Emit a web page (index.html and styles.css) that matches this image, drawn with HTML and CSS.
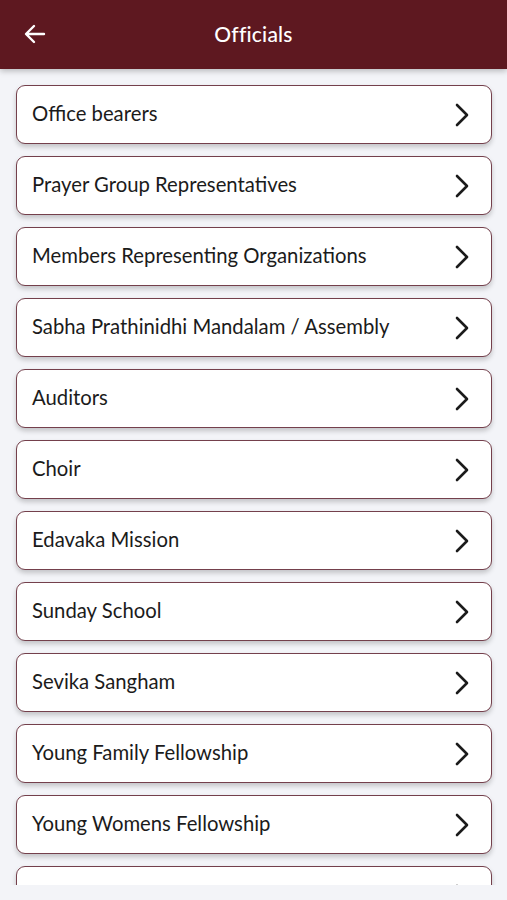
FILE: index.html
```html
<!DOCTYPE html>
<html lang="en">
<head>
  <meta charset="UTF-8" />
  <meta name="viewport" content="width=device-width, initial-scale=1.0" />
  <title>Officials</title>
  <link rel="stylesheet" href="styles.css">
</head>
<body>
  <header class="topbar">
    <button class="back" aria-label="Back">
      <svg width="22" height="20" viewBox="0 0 22 20" fill="none" stroke="#fff" stroke-width="2.4" stroke-linecap="round" stroke-linejoin="round">
        <path d="M20 10H2.5M10 2L2 10l8 8" />
      </svg>
    </button>
    <h1 class="title">Officials</h1>
  </header>

  <main class="list">
    <a class="item" href="#"><span>Office bearers</span><svg class="chev" viewBox="0 0 14 24"><path d="M2 2l10 10L2 22" /></svg></a>
    <a class="item" href="#"><span>Prayer Group Representatives</span><svg class="chev" viewBox="0 0 14 24"><path d="M2 2l10 10L2 22" /></svg></a>
    <a class="item" href="#"><span>Members Representing Organizations</span><svg class="chev" viewBox="0 0 14 24"><path d="M2 2l10 10L2 22" /></svg></a>
    <a class="item" href="#"><span>Sabha Prathinidhi Mandalam / Assembly</span><svg class="chev" viewBox="0 0 14 24"><path d="M2 2l10 10L2 22" /></svg></a>
    <a class="item" href="#"><span>Auditors</span><svg class="chev" viewBox="0 0 14 24"><path d="M2 2l10 10L2 22" /></svg></a>
    <a class="item" href="#"><span>Choir</span><svg class="chev" viewBox="0 0 14 24"><path d="M2 2l10 10L2 22" /></svg></a>
    <a class="item" href="#"><span>Edavaka Mission</span><svg class="chev" viewBox="0 0 14 24"><path d="M2 2l10 10L2 22" /></svg></a>
    <a class="item" href="#"><span>Sunday School</span><svg class="chev" viewBox="0 0 14 24"><path d="M2 2l10 10L2 22" /></svg></a>
    <a class="item" href="#"><span>Sevika Sangham</span><svg class="chev" viewBox="0 0 14 24"><path d="M2 2l10 10L2 22" /></svg></a>
    <a class="item" href="#"><span>Young Family Fellowship</span><svg class="chev" viewBox="0 0 14 24"><path d="M2 2l10 10L2 22" /></svg></a>
    <a class="item" href="#"><span>Young Womens Fellowship</span><svg class="chev" viewBox="0 0 14 24"><path d="M2 2l10 10L2 22" /></svg></a>
    <a class="item" href="#"><span>Youth Fellowship</span><svg class="chev" viewBox="0 0 14 24"><path d="M2 2l10 10L2 22" /></svg></a>
  </main>
</body>
</html>
```

FILE: styles.css
```css
body {
  margin: 0;
  height: 900px;
  overflow: hidden;
  background-color: #f3f4f8;
  font-family: "Lato", "Noto Sans", sans-serif;
}

.topbar {
  height: 69px;
  background-color: #5e1820;
  display: flex;
  align-items: center;
  justify-content: center;
  position: relative;
  box-shadow: 0 2px 6px rgba(0, 0, 0, 0.25);
  z-index: 1;
}

.back {
  position: absolute;
  left: 24px;
  top: 24px;
  padding: 0;
  border: none;
  background: none;
  display: flex;
}

.title {
  margin: 0 0 2px;
  color: #fff;
  font-size: 21px;
  font-weight: 500;
  letter-spacing: 0.2px;
}

.list {
  height: 800px;
  overflow: hidden;
  padding: 16px 15px 0 16px;
  display: flex;
  flex-direction: column;
  gap: 12px;
}

.item {
  flex: none;
  box-sizing: border-box;
  height: 59px;
  display: flex;
  align-items: center;
  justify-content: space-between;
  padding: 0 22px 0 15px;
  background-color: #fff;
  border: 1.5px solid #74404c;
  border-radius: 9px;
  box-shadow: 0 3px 5px rgba(0, 0, 0, 0.2);
  color: #1b1b1b;
  text-decoration: none;
  font-size: 20.3px;
}

.item span {
  margin-bottom: 4px;
}

.chev {
  width: 14px;
  height: 24px;
  fill: none;
  stroke: #1b1b1b;
  stroke-width: 2.6;
  stroke-linecap: round;
  stroke-linejoin: round;
}
```
